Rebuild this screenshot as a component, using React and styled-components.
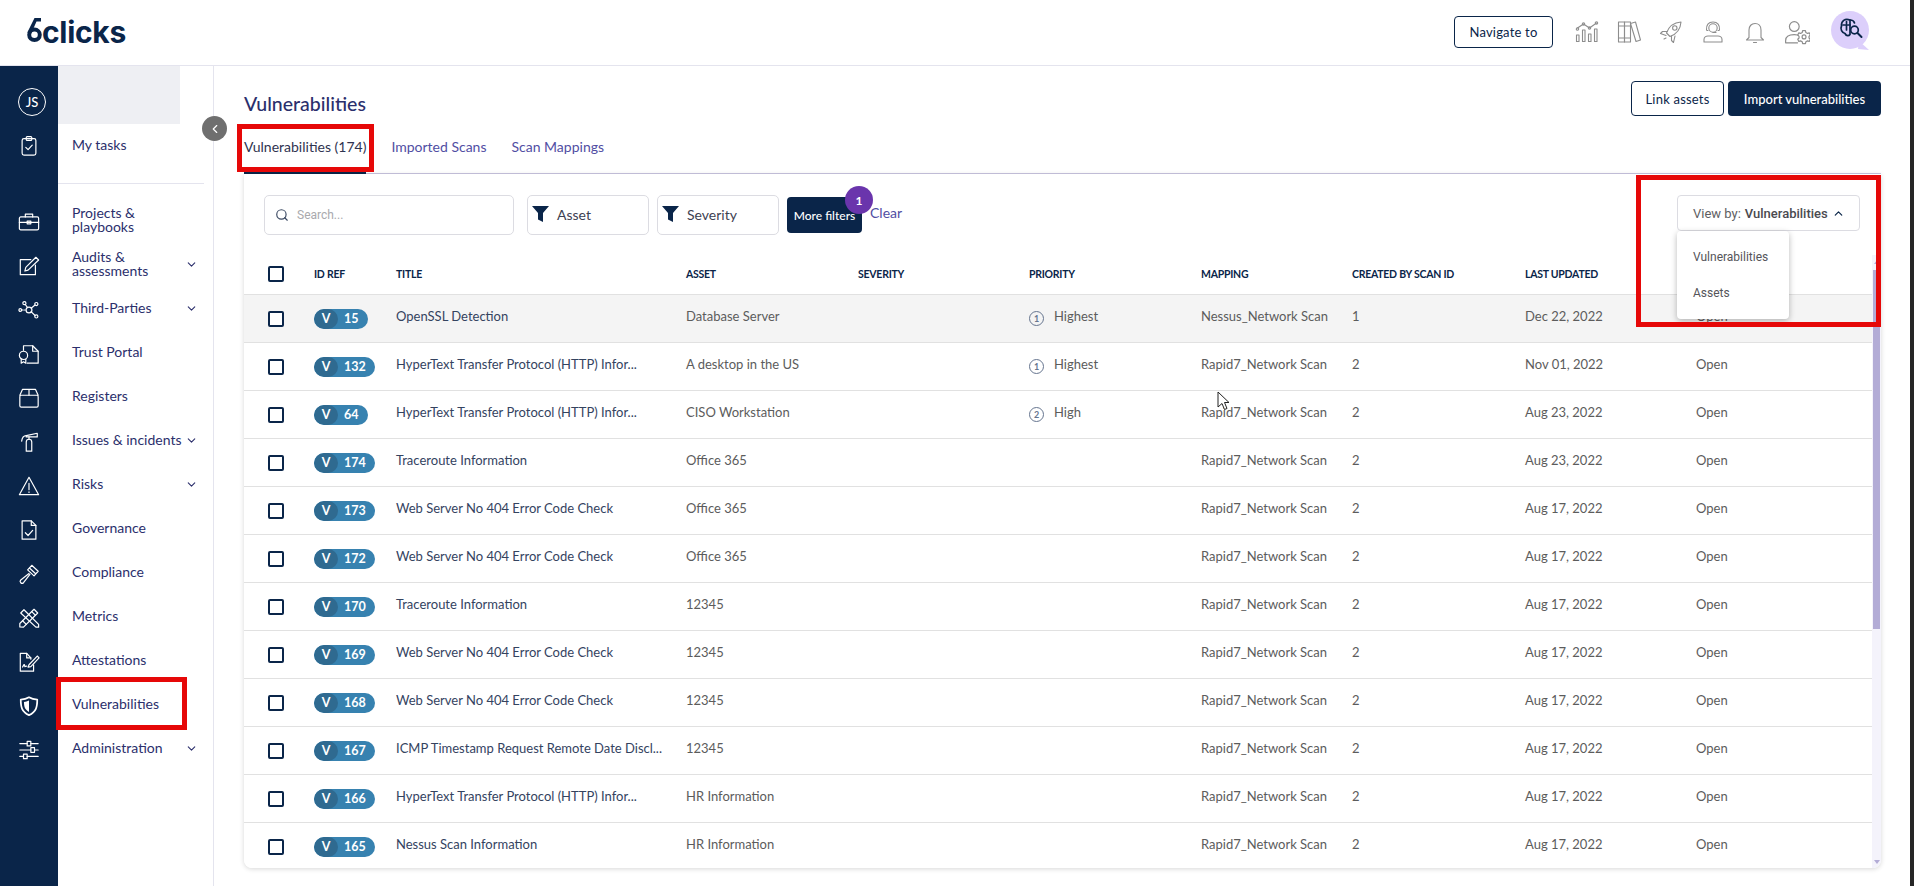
import React from "react";
import styled, { createGlobalStyle } from "styled-components";
import { ChevronDown, ChevronLeft, ChevronUp, Search } from "lucide-react";

const navy = "#0a2549";
const indigo = "#2b2f6c";

const GlobalStyle = createGlobalStyle`
	html, body {
		margin: 0;
		padding: 0;
		background: #fff;
		font-family: Lato, "Liberation Sans", sans-serif;
	}
	* {
		box-sizing: border-box;
	}
`;

const Page = styled.div`
	position: relative;
	display: flex;
	width: 1914px;
	height: 886px;
	overflow: hidden;
`;

const Screen = styled.div`
	flex: 1;
	display: flex;
	flex-direction: column;
	min-width: 0;
`;

const ScreenEdge = styled.div`
	width: 4px;
	background: #262626;
`;

const TopBar = styled.header`
	height: 66px;
	flex: none;
	display: flex;
	align-items: center;
	justify-content: space-between;
	padding: 0 37px 2px 27px;
	border-bottom: 1px solid #e4e4ee;
`;

const Logo = styled.div`
	display: flex;
	align-items: center;
	color: ${navy};
	font-family: Inter, sans-serif;
	font-weight: 700;
	font-size: 30px;
	letter-spacing: -0.3px;
	line-height: 30px;
	svg {
		margin-right: 0;
		margin-top: -2px;
	}
`;

const TopActions = styled.div`
	display: flex;
	align-items: center;
`;

const OutlineButton = styled.button`
	height: ${(p) => p.$height}px;
	width: ${(p) => p.$width}px;
	background: #fff;
	border: 1px solid ${navy};
	border-radius: 4px;
	color: ${navy};
	font-family: Lato, sans-serif;
	font-size: 13px;
	letter-spacing: 0.2px;
	padding: 0;
`;

const TopIcon = styled.span`
	display: flex;
	justify-content: center;
	width: 42px;
	color: #8d8d8d;
`;

const TopIcons = styled.div`
	display: flex;
	align-items: center;
	margin: 0 13px 0 13px;
`;

const Body = styled.div`
	flex: 1;
	display: flex;
	min-height: 0;
`;

const Rail = styled.nav`
	width: 58px;
	flex: none;
	background: ${navy};
	display: flex;
	flex-direction: column;
	align-items: center;
	padding-top: 22px;
	color: #fff;
`;

const Initials = styled.div`
	width: 28px;
	height: 28px;
	margin-left: 6px;
	border: 1px solid #fff;
	border-radius: 50%;
	display: flex;
	align-items: center;
	justify-content: center;
	font-size: 13px;
	font-weight: 500;
	margin-bottom: 8px;
`;

const RailSlot = styled.div`
	height: 44px;
	width: 100%;
	flex: none;
	display: flex;
	align-items: center;
	justify-content: center;
`;

const RailGap = styled.div`
	height: 32px;
	flex: none;
`;

const SideNav = styled.aside`
	position: relative;
	width: 156px;
	flex: none;
	border-right: 1px solid #e4e4ee;
`;

const SideBlock = styled.div`
	width: 122px;
	height: 58px;
	background: #eeeff3;
`;

const SideDivider = styled.div`
	height: 1px;
	width: 146px;
	background: #e4e4ee;
	margin: 15px 0 14px;
`;

const NavRow = styled.div`
	height: 44px;
	width: 146px;
	display: flex;
	align-items: center;
	justify-content: space-between;
	padding-left: 14px;
	color: ${indigo};
	font-size: 14px;
	line-height: 14px;
	svg {
		flex: none;
		color: ${indigo};
		margin-right: 6px;
	}
`;

const TaskRow = styled(NavRow)`
	padding-bottom: 2px;
`;

const NavLabel = styled.span`
	white-space: pre-line;
`;

const CollapseButton = styled.div`
	position: absolute;
	top: 50px;
	right: -14px;
	width: 25px;
	height: 25px;
	border-radius: 50%;
	background: #6f6f6f;
	color: #fff;
	display: flex;
	align-items: center;
	justify-content: center;
`;

const Main = styled.main`
	flex: 1;
	min-width: 0;
	display: flex;
	flex-direction: column;
	padding: 15px 29px 18px 30px;
`;

const PageHead = styled.div`
	display: flex;
	justify-content: space-between;
	align-items: flex-end;
`;

const PageTitle = styled.h1`
	margin: 0;
	font-size: 19.5px;
	line-height: 24px;
	font-weight: 500;
	color: ${indigo};
`;

const HeadButtons = styled.div`
	display: flex;
	gap: 4px;
`;

const SolidButton = styled.button`
	height: ${(p) => p.$height}px;
	width: ${(p) => p.$width}px;
	background: ${navy};
	border: none;
	border-radius: 4px;
	color: #fff;
	font-family: Lato, sans-serif;
	font-size: ${(p) => p.$size || 13}px;
	font-weight: 500;
	padding: 0;
	flex: none;
`;

const Tabs = styled.div`
	margin-top: 6px;
	height: 52px;
	flex: none;
	display: flex;
	gap: 25px;
	border-bottom: 1px solid #c9c5e0;
`;

const Tab = styled.div`
	height: 52px;
	display: flex;
	align-items: center;
	padding-bottom: 2px;
	font-size: 14px;
	color: ${(p) => (p.$active ? "#2f3350" : "#514ea3")};
	border-bottom: 2px solid ${(p) => (p.$active ? navy : "transparent")};
`;

const Card = styled.section`
	flex: 1;
	min-height: 0;
	display: flex;
	flex-direction: column;
	background: #fff;
	border-radius: 0 0 8px 8px;
	box-shadow: 0 1px 5px rgba(0, 0, 0, 0.16);
`;

const FilterBar = styled.div`
	height: 80px;
	flex: none;
	display: flex;
	align-items: flex-start;
	padding: 21px 21px 0 20px;
`;

const SearchBox = styled.div`
	width: 250px;
	height: 40px;
	flex: none;
	display: flex;
	align-items: center;
	gap: 8px;
	padding-left: 10px;
	border: 1px solid #dcdce2;
	border-radius: 5px;
	color: #3c4a63;
	font-family: Roboto, sans-serif;
	font-size: 12px;
	span {
		color: #a9a9ad;
	}
`;

const FilterSelect = styled.div`
	width: 122px;
	height: 40px;
	flex: none;
	display: flex;
	align-items: center;
	gap: 8px;
	margin-left: ${(p) => p.$gap}px;
	padding: 0 0 2px 4px;
	border: 1px solid #dcdce2;
	border-radius: 5px;
	color: #3d4152;
	font-size: 14px;
`;

const MoreFilters = styled.div`
	position: relative;
	margin: 2px 0 0 8px;
`;

const CountBadge = styled.span`
	position: absolute;
	top: -11px;
	right: -11px;
	width: 28px;
	height: 28px;
	border-radius: 50%;
	background: #6a35ac;
	color: #fff;
	font-size: 12px;
	font-weight: 700;
	display: flex;
	align-items: center;
	justify-content: center;
`;

const ClearLink = styled.span`
	margin: 9px 0 0 8px;
	color: #514ea3;
	font-size: 14px;
`;

const ViewBy = styled.div`
	position: relative;
	margin-left: auto;
	width: 183px;
	height: 36px;
	display: flex;
	align-items: center;
	gap: 4px;
	padding-left: 15px;
	border: 1px solid #dcdce2;
	border-radius: 4px;
	font-family: Roboto, sans-serif;
	font-size: 13px;
	color: #5e5e62;
	b {
		font-weight: 500;
		color: #4a4a50;
	}
	svg {
		color: ${navy};
		flex: none;
	}
`;

const ViewMenu = styled.div`
	position: absolute;
	z-index: 3;
	top: 35px;
	left: -1px;
	width: 112px;
	height: 88px;
	padding-top: 8px;
	background: #fff;
	border-radius: 4px;
	box-shadow: 0 2px 6px rgba(0, 0, 0, 0.28);
`;

const ViewOption = styled.div`
	height: 36px;
	display: flex;
	align-items: center;
	padding-left: 16px;
	font-size: 12px;
	color: #55555a;
`;

const TableArea = styled.div`
	flex: 1;
	min-height: 0;
	display: flex;
	overflow: hidden;
	border-radius: 0 0 8px 8px;
`;

const Table = styled.div`
	flex: 1;
	min-width: 0;
`;

const columns = "46px 82px 290px 172px 171px 172px 151px 173px 171px 1fr";

const HeadRow = styled.div`
	height: 41px;
	display: grid;
	grid-template-columns: ${columns};
	align-items: center;
	padding-left: 24px;
	border-bottom: 1px solid #e1e1e1;
`;

const HeadCell = styled.div`
	font-size: 10.5px;
	font-weight: 700;
	letter-spacing: -0.25px;
	color: ${navy};
	text-transform: uppercase;
	white-space: nowrap;
`;

const Row = styled.div`
	height: 48px;
	display: grid;
	grid-template-columns: ${columns};
	align-items: center;
	padding-left: 24px;
	border-bottom: 1px solid #e1e1e1;
	background: ${(p) => (p.$hover ? "#f4f4f4" : "#fff")};
`;

const CheckBox = styled.span`
	display: block;
	width: 16px;
	height: 16px;
	border: 2px solid ${navy};
	border-radius: 2px;
	background: #fff;
`;

const RefBadge = styled.span`
	display: inline-flex;
	align-items: center;
	height: 20px;
	border-radius: 10px;
	background: #3782b0;
	color: #fff;
	font-size: 12.5px;
	font-weight: 700;
	width: fit-content;
	overflow: hidden;
`;

const RefLetter = styled.span`
	width: 24px;
	height: 20px;
	display: flex;
	align-items: center;
	justify-content: center;
	background: #2f6a90;
	border-radius: 10px;
	margin-right: 6px;
`;

const RefNumber = styled.span`
	padding-right: 9px;
`;

const Cell = styled.div`
	font-size: 13px;
	color: ${(p) => p.$color || "#5c5c5c"};
	padding-bottom: 6px;
	white-space: nowrap;
`;

const PriorityCell = styled.div`
	display: flex;
	align-items: center;
	gap: 10px;
	font-size: 13px;
	color: #5c5c5c;
`;

const PriorityMark = styled.span`
	width: 15px;
	height: 15px;
	flex: none;
	border: 1px solid #66758f;
	border-radius: 50%;
	color: #66758f;
	font-size: 9px;
	font-weight: 700;
	display: flex;
	align-items: center;
	justify-content: center;
`;

const PriorityLabel = styled.span`
	padding-bottom: 6px;
`;

const ScrollTrack = styled.div`
	width: 9px;
	flex: none;
	display: flex;
	flex-direction: column;
	background: #f4f3fb;
	margin-top: 1px;
	padding: 5px 1px 4px;
`;

const ScrollArrow = styled.span`
	display: block;
	flex: none;
	width: 0;
	height: 0;
	margin: ${(p) => (p.$down ? "auto" : "0")} auto 0;
	border-left: 3.5px solid transparent;
	border-right: 3.5px solid transparent;
	border-${(p) => (p.$down ? "top" : "bottom")}: 4px solid #b3acd6;
`;

const ScrollThumb = styled.div`
	height: 359px;
	flex: none;
	margin-top: 6px;
	background: #b3acd6;
`;

const Highlight = styled.div`
	position: absolute;
	z-index: 5;
	left: ${(p) => p.$x}px;
	top: ${(p) => p.$y}px;
	width: ${(p) => p.$w}px;
	height: ${(p) => p.$h}px;
	border: 5px solid #e60808;
	pointer-events: none;
`;

const Pointer = styled.svg`
	position: absolute;
	z-index: 4;
	left: 1217px;
	top: 391px;
`;

const Line = ({ size = 22, stroke = 1.3, children }) => (
	<svg
		width={size}
		height={size}
		viewBox='0 0 24 24'
		fill='none'
		stroke='currentColor'
		strokeWidth={stroke}
		strokeLinecap='round'
		strokeLinejoin='round'>
		{children}
	</svg>
);

const railIcons = {
	clipboard: (
		<>
			<rect x='4.5' y='4' width='15' height='18' rx='2' />
			<rect x='9' y='1.8' width='6' height='4' rx='1' />
			<path d='M8.5 13.5l2.5 2.5 4.5-5' />
		</>
	),
	briefcase: (
		<>
			<rect x='1.5' y='6.5' width='21' height='14' rx='1.5' />
			<path d='M8 6.5V3.5h8v3M1.5 12.5h21' />
			<rect x='10' y='11' width='4' height='3' />
		</>
	),
	edit: (
		<>
			<path d='M14 5H2.5v16.5H19V11' />
			<path d='M8.5 13.5L19.5 2.5l3 3L11 16.5l-3.5 1z' />
		</>
	),
	network: (
		<>
			<circle cx='12' cy='12' r='3.2' />
			<circle cx='7' cy='4.5' r='1.7' />
			<circle cx='20' cy='5.5' r='1.7' />
			<circle cx='20' cy='19' r='1.7' />
			<circle cx='2.5' cy='12' r='1.5' />
			<path d='M8 6l2.4 3.5M18.6 6.6l-4.3 3.4M18.6 18l-4.4-4.2M4.5 12h1.2M7 12h1' />
		</>
	),
	cert: (
		<>
			<path d='M6 8V3h10l6 6v13H10' />
			<path d='M16 3v6h6' />
			<circle cx='6' cy='13.5' r='4.5' />
			<path d='M3.5 17.5V22l2.5-1.5L8.500 22v-4.500' />
		</>
	),
	box: (
		<>
			<rect x='2' y='9' width='20' height='13' rx='1.5' />
			<path d='M2 9l3-6.500h14L22 9M12 2.500V9' />
		</>
	),
	extinguisher: (
		<>
			<path d='M9 12c0-2 1-3 3-3s3 1 3 3v10H9z' />
			<path d='M12 9V6.500' />
			<path d='M9 5l12-2.500v4L9 6.500z' />
			<path d='M9 5C6 5 4.500 7 4 11' />
		</>
	),
	warning: (
		<>
			<path d='M12 2.500L1.500 21.500h21z' />
			<path d='M12 9v7M12 18.500v.6' />
		</>
	),
	filecheck: (
		<>
			<path d='M4.500 2h10l5 5v15h-15z' />
			<path d='M14.500 2v5h5M8 15l3 3 5-5.500' />
		</>
	),
	hammer: (
		<>
			<path d='M10.500 7.500L15 2.500l7 6.500-4.500 5z' />
			<path d='M12 11.500l-9 7a2 2 0 003 3l7-9' />
			<path d='M12.500 5.500l6.500 6' />
		</>
	),
	tools: (
		<>
			<path d='M3 6.500L6.500 3l16 16v3h-3z' />
			<path d='M17.500 2.500l4 4L6 22l-4-.200L2 18z' />
			<path d='M15 5l4 4M5 15l4 4' />
		</>
	),
	signature: (
		<>
			<path d='M14 9V7.500L9.500 2.500H2.500v19.500H17V15' />
			<path d='M9.500 2.500V7.500H14' />
			<path d='M12 15L21 5.500l2 2L14 17l-3 .5z' />
			<path d='M5 17.500c1-2 1.500-3 2-2.500s0 2.500 1 2c.6-.3 1-1 1.500-.500' />
		</>
	),
	sliders: (
		<>
			<path d='M2 5h8M14 5h8M2 12h12M18 12h4M2 19h4M10 19h12' />
			<rect x='10' y='2.500' width='4' height='5' />
			<rect x='14' y='9.500' width='4' height='5' />
			<rect x='6' y='16.500' width='4' height='5' />
		</>
	),
};

const ShieldIcon = () => (
	<Line size={22} stroke={1.9}>
		<path d='M12 2.500c3 2 6 2.500 9 2.500 0 8-1 13.500-9 17-8-3.500-9-9-9-17 3 0 6-.5 9-2.500z' />
		<path
			d='M12 6c-2 1-3.500 1.500-5.500 1.700C6.600 13 7.500 16 12 18.500z'
			fill='currentColor'
			stroke='none'
		/>
	</Line>
);

const railTop = ["briefcase", "edit", "network", "cert", "box", "extinguisher", "warning", "filecheck", "hammer", "tools", "signature"];

const topIcons = [
	<Line key='chart' size={24} stroke={1.1}>
		<path d='M2.500 8l6-4 6 4 7-5' />
		<circle cx='2.500' cy='9' r='1.200' />
		<circle cx='8.500' cy='4' r='1.200' />
		<circle cx='14.500' cy='8' r='1.200' />
		<circle cx='21.500' cy='3' r='1.200' />
		<rect x='1.500' y='15' width='2.500' height='6.500' />
		<rect x='7.500' y='10' width='2.500' height='11.500' />
		<rect x='13.500' y='14' width='2.500' height='7.500' />
		<rect x='19.500' y='9' width='2.500' height='12.500' />
	</Line>,
	<Line key='books' size={24} stroke={1.1}>
		<rect x='1.500' y='2' width='6' height='20' />
		<rect x='7.500' y='2' width='6' height='20' />
		<path d='M13.500 3.500l5-1.500 5 18-4.500 1.500zM1.500 6h12M1.500 18h12' />
	</Line>,
	<Line key='rocket' size={24} stroke={1.1}>
		<path d='M7.500 13C10 6 15 2.500 22 2c-.5 7-4 12-11 14.500z' />
		<path d='M8 11.500H3.500L1.500 13.500l5.500 2M12.500 16v4.500l2 2 1.500-6.500' />
		<circle cx='15.800' cy='8' r='2.200' />
		<path d='M7 18l-2 1' />
	</Line>,
	<Line key='agent' size={24} stroke={1.1}>
		<circle cx='12' cy='8' r='4.200' />
		<path d='M5.500 10c-.5-5 2-8 6.500-8s7 3 6.500 8M6 10.500h1M17 10.500h1' />
		<path d='M3 22v-2.500c0-2 2-3.500 4-3.500h10c2 0 4 1.500 4 3.500V22zM12 12.500h3' />
	</Line>,
	<Line key='bell' size={24} stroke={1.1}>
		<path d='M6 17.500V10c0-4 2.500-6.500 6-6.500s6 2.500 6 6.500v7.500l2.500 2.500h-17z' />
		<path d='M10.500 22.500h3' />
	</Line>,
	<Line key='usercog' size={26} stroke={1.1}>
		<circle cx='9.500' cy='7' r='4.500' />
		<path d='M1.500 22v-2c0-3.500 3-5.500 8-5.500 1 0 2 .1 3 .3M1.500 22h11' />
		<circle cx='18.500' cy='16.500' r='1.800' />
		<path d='M17.200 10.800h2.600l.4 1.700 1.500.800 1.600-.5 1 2-1.200 1.200v1.500l1.200 1.200-1 2-1.600-.5-1.500.800-.4 1.700h-2.600l-.4-1.700-1.500-.8-1.600.5-1-2 1.200-1.200v-1.500l-1.200-1.200 1-2 1.600.5 1.500-.8z' />
	</Line>,
];

const AvatarBubble = () => (
	<svg width='42' height='42' viewBox='0 0 42 42'>
		<circle cx='19' cy='19' r='19' fill='#dccffb' />
		<path d='M28 30l10 9-11-1z' fill='#dccffb' />
		<g fill='none' stroke={navy} strokeWidth='1.7' strokeLinecap='round'>
			<path d='M19 9c-5-2-9 1-8.500 6-1.500 3 .5 7 3.500 7.500 1.500 3 4 2.500 5 1V9z' />
			<path d='M19 9c2.500 0 4 1 4.500 3M12 14h7M15.500 14v5M15.500 10.500v2' />
			<circle cx='23.500' cy='19' r='3.800' />
			<path d='M26.500 22l4 4' strokeWidth='2' />
		</g>
	</svg>
);

const LogoSix = () => (
	<svg width='15' height='25' viewBox='0 0 15 25'>
		<circle cx='7.500' cy='16.800' r='5.300' fill='none' stroke={navy} strokeWidth='4' />
		<path d='M14 0H7.500L.300 14.500l3.700 1.500L9.500 3.600H14z' fill={navy} />
	</svg>
);

const FunnelIcon = () => (
	<svg width='17' height='16' viewBox='0 0 17 16'>
		<path d='M0 0h17l-6 7v9l-5-2.500V7z' fill={navy} />
	</svg>
);

const navItems = [
	{ label: "Projects &\nplaybooks" },
	{ label: "Audits &\nassessments", more: true },
	{ label: "Third-Parties", more: true },
	{ label: "Trust Portal" },
	{ label: "Registers" },
	{ label: "Issues & incidents", more: true },
	{ label: "Risks", more: true },
	{ label: "Governance" },
	{ label: "Compliance" },
	{ label: "Metrics" },
	{ label: "Attestations" },
	{ label: "Vulnerabilities" },
	{ label: "Administration", more: true },
];

const http = "HyperText Transfer Protocol (HTTP) Infor...";
const webServer = "Web Server No 404 Error Code Check";
const rapid = "Rapid7_Network Scan";

const rows = [
	{ id: 15, title: "OpenSSL Detection", asset: "Database Server", rank: 1, priority: "Highest", mapping: "Nessus_Network Scan", scan: 1, updated: "Dec 22, 2022" },
	{ id: 132, title: http, asset: "A desktop in the US", rank: 1, priority: "Highest", mapping: rapid, scan: 2, updated: "Nov 01, 2022" },
	{ id: 64, title: http, asset: "CISO Workstation", rank: 2, priority: "High", mapping: rapid, scan: 2, updated: "Aug 23, 2022" },
	{ id: 174, title: "Traceroute Information", asset: "Office 365", mapping: rapid, scan: 2, updated: "Aug 23, 2022" },
	{ id: 173, title: webServer, asset: "Office 365", mapping: rapid, scan: 2, updated: "Aug 17, 2022" },
	{ id: 172, title: webServer, asset: "Office 365", mapping: rapid, scan: 2, updated: "Aug 17, 2022" },
	{ id: 170, title: "Traceroute Information", asset: "12345", mapping: rapid, scan: 2, updated: "Aug 17, 2022" },
	{ id: 169, title: webServer, asset: "12345", mapping: rapid, scan: 2, updated: "Aug 17, 2022" },
	{ id: 168, title: webServer, asset: "12345", mapping: rapid, scan: 2, updated: "Aug 17, 2022" },
	{ id: 167, title: "ICMP Timestamp Request Remote Date Discl...", asset: "12345", mapping: rapid, scan: 2, updated: "Aug 17, 2022" },
	{ id: 166, title: http, asset: "HR Information", mapping: rapid, scan: 2, updated: "Aug 17, 2022" },
	{ id: 165, title: "Nessus Scan Information", asset: "HR Information", mapping: rapid, scan: 2, updated: "Aug 17, 2022" },
];

const headers = ["ID Ref", "Title", "Asset", "Severity", "Priority", "Mapping", "Created by scan ID", "Last updated"];

const App = () => {
	return (
		<Page>
			<GlobalStyle />
			<Screen>
				<TopBar>
					<Logo>
						<LogoSix />
						clicks
					</Logo>
					<TopActions>
						<OutlineButton $width={99} $height={32}>
							Navigate to
						</OutlineButton>
						<TopIcons>
							{topIcons.map((icon) => (
								<TopIcon key={icon.key}>{icon}</TopIcon>
							))}
						</TopIcons>
						<AvatarBubble />
					</TopActions>
				</TopBar>
				<Body>
					<Rail>
						<Initials>JS</Initials>
						<RailSlot>
							<Line>{railIcons.clipboard}</Line>
						</RailSlot>
						<RailGap />
						{railTop.map((name) => (
							<RailSlot key={name}>
								<Line>{railIcons[name]}</Line>
							</RailSlot>
						))}
						<RailSlot>
							<ShieldIcon />
						</RailSlot>
						<RailSlot>
							<Line>{railIcons.sliders}</Line>
						</RailSlot>
					</Rail>
					<SideNav>
						<SideBlock />
						<TaskRow>My tasks</TaskRow>
						<SideDivider />
						{navItems.map((item) => (
							<NavRow key={item.label}>
								<NavLabel>{item.label}</NavLabel>
								{item.more && <ChevronDown size={13} strokeWidth={2} />}
							</NavRow>
						))}
						<CollapseButton>
							<ChevronLeft size={14} strokeWidth={2} />
						</CollapseButton>
					</SideNav>
					<Main>
						<PageHead>
							<PageTitle>Vulnerabilities</PageTitle>
							<HeadButtons>
								<OutlineButton $width={93} $height={35}>
									Link assets
								</OutlineButton>
								<SolidButton $width={153} $height={35}>
									Import vulnerabilities
								</SolidButton>
							</HeadButtons>
						</PageHead>
						<Tabs>
							<Tab $active>Vulnerabilities (174)</Tab>
							<Tab>Imported Scans</Tab>
							<Tab>Scan Mappings</Tab>
						</Tabs>
						<Card>
							<FilterBar>
								<SearchBox>
									<Search size={14} strokeWidth={2} />
									<span>Search...</span>
								</SearchBox>
								<FilterSelect $gap={13}>
									<FunnelIcon />
									Asset
								</FilterSelect>
								<FilterSelect $gap={8}>
									<FunnelIcon />
									Severity
								</FilterSelect>
								<MoreFilters>
									<SolidButton $width={75} $height={36} $size={12}>
										More filters
									</SolidButton>
									<CountBadge>1</CountBadge>
								</MoreFilters>
								<ClearLink>Clear</ClearLink>
								<ViewBy>
									View by: <b>Vulnerabilities</b>
									<ChevronUp size={13} strokeWidth={2.2} />
									<ViewMenu>
										<ViewOption>Vulnerabilities</ViewOption>
										<ViewOption>Assets</ViewOption>
									</ViewMenu>
								</ViewBy>
							</FilterBar>
							<TableArea>
								<Table>
									<HeadRow>
										<CheckBox />
										{headers.map((h) => (
											<HeadCell key={h}>{h}</HeadCell>
										))}
									</HeadRow>
									{rows.map((r, i) => (
										<Row key={r.id} $hover={i === 0}>
											<CheckBox />
											<RefBadge>
												<RefLetter>V</RefLetter>
												<RefNumber>{r.id}</RefNumber>
											</RefBadge>
											<Cell $color='#34435f'>{r.title}</Cell>
											<Cell>{r.asset}</Cell>
											<Cell />
											{r.rank ? (
												<PriorityCell>
													<PriorityMark>{r.rank}</PriorityMark>
													<PriorityLabel>{r.priority}</PriorityLabel>
												</PriorityCell>
											) : (
												<Cell />
											)}
											<Cell>{r.mapping}</Cell>
											<Cell>{r.scan}</Cell>
											<Cell>{r.updated}</Cell>
											<Cell>Open</Cell>
										</Row>
									))}
								</Table>
								<ScrollTrack>
									<ScrollArrow />
									<ScrollThumb />
									<ScrollArrow $down />
								</ScrollTrack>
							</TableArea>
						</Card>
					</Main>
				</Body>
			</Screen>
			<ScreenEdge />
			<Highlight $x={237} $y={124} $w={137} $h={48} />
			<Highlight $x={56} $y={677} $w={131} $h={53} />
			<Highlight $x={1636} $y={175} $w={245} $h={152} />
			<Pointer width='13' height='20' viewBox='0 0 13 20'>
				<path d='M1 1v15l4-3.500 2.500 6 2.500-1-2.500-6H12z' fill='#fff' stroke='#222' strokeWidth='1' />
			</Pointer>
		</Page>
	);
};

export default App;
